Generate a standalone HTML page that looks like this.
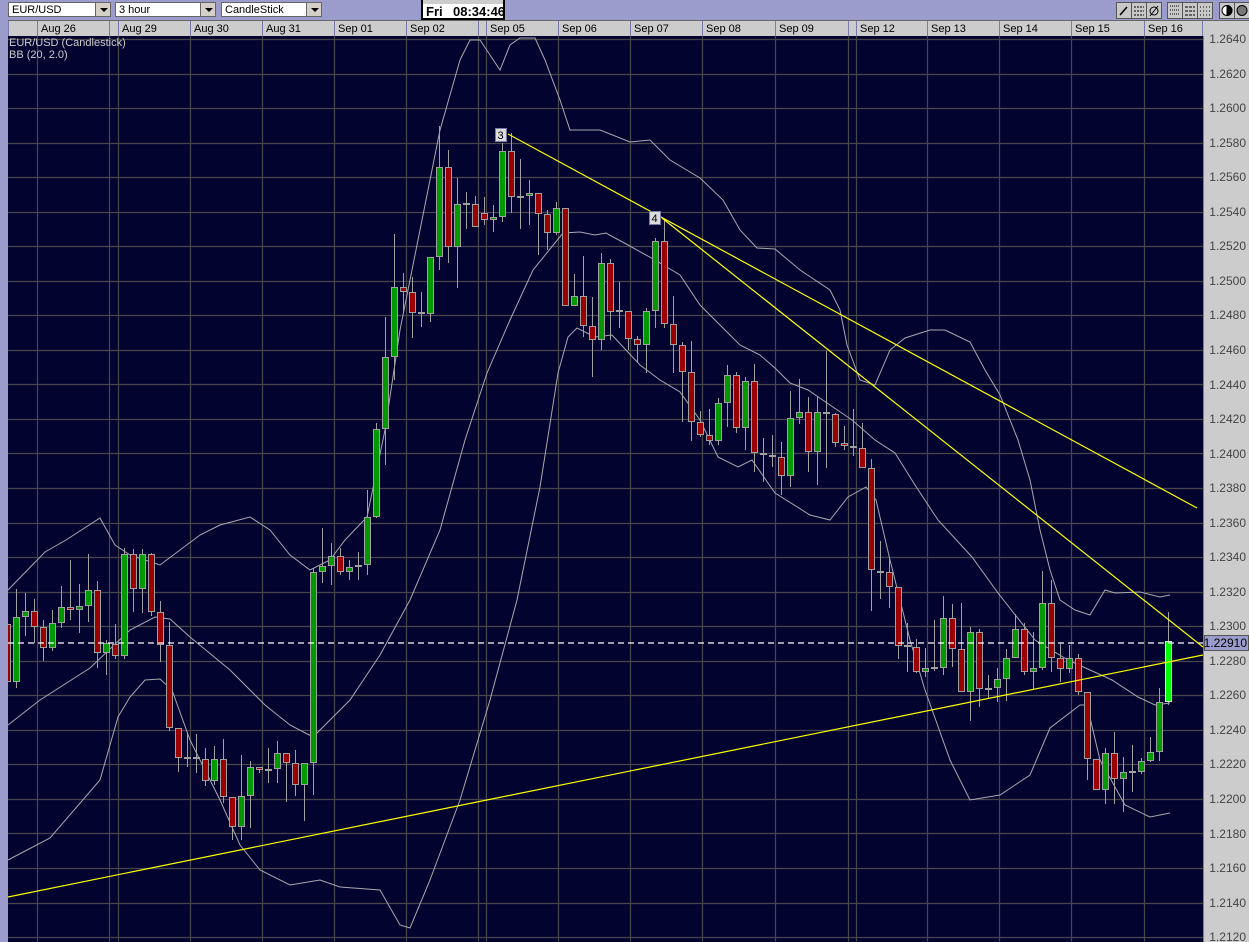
<!DOCTYPE html>
<html><head><meta charset="utf-8"><style>
html,body{margin:0;padding:0;}
body{width:1249px;height:942px;position:relative;overflow:hidden;background:#9c9ccc;font-family:"Liberation Sans",sans-serif;}
.dd{position:absolute;top:2px;height:15px;background:#fff;border:1px solid #666;font-size:11px;line-height:15px;padding-left:3px;box-sizing:border-box;}
.ar{position:absolute;top:2px;width:16px;height:15px;background:#d4d0c8;border:1px solid #666;box-sizing:border-box;}
.ar:after{content:"";position:absolute;left:4px;top:5px;border-left:4px solid transparent;border-right:4px solid transparent;border-top:4px solid #000;}
.clk{position:absolute;left:421px;top:0;width:84px;height:20px;background:#fff;border:2px solid #000;border-top:none;box-sizing:border-box;font-weight:bold;font-size:13px;line-height:20px;}
</style></head><body>
<div class="dd" style="left:8px;width:88px;">EUR/USD</div><div class="ar" style="left:95px"></div>
<div class="dd" style="left:115px;width:86px;">3 hour</div><div class="ar" style="left:200px"></div>
<div class="dd" style="left:221px;width:86px;">CandleStick</div><div class="ar" style="left:306px"></div>
<div class="clk"><div style="position:absolute;left:0;top:0;width:80px;height:4px;background:#ccc"></div><span style="position:absolute;left:3px;top:2px">Fri</span><span style="position:absolute;left:30px;top:2px">08:34:46</span></div>
<svg width="1249" height="942" style="position:absolute;left:0;top:0" id="s" xmlns="http://www.w3.org/2000/svg">
<defs><clipPath id="cp"><rect x="8" y="36" width="1195" height="906"/></clipPath></defs>
<g fill="#c8c8c8" stroke="#555">
<rect x="1116.5" y="2.5" width="15" height="16"/><rect x="1131.5" y="2.5" width="15" height="16"/><rect x="1146.5" y="2.5" width="15" height="16"/>
<rect x="1167.5" y="2.5" width="15" height="16"/><rect x="1182.5" y="2.5" width="15" height="16"/><rect x="1197.5" y="2.5" width="15" height="16"/>
<rect x="1219.5" y="2.5" width="15" height="16"/><rect x="1234.5" y="2.5" width="15" height="16"/>
</g>
<g stroke="#000" fill="none">
<path d="M1120 15 L1127 7" stroke-width="1.5"/>
<path d="M1134 7h10M1134 11h10M1134 15h10" stroke-dasharray="2 1"/>
<circle cx="1154" cy="11" r="4"/><path d="M1150 16 L1158 6"/>
<path d="M1170 6h10M1170 10h10M1170 14h10" stroke-dasharray="1 1"/>
<path d="M1185 7h10M1185 11h10M1185 15h10" stroke-dasharray="3 1"/>
<path d="M1200 7h10M1200 11h10M1200 15h10" stroke-dasharray="1 2"/>
<circle cx="1227" cy="10.5" r="5" fill="#fff"/><path d="M1227 5.5 A5 5 0 0 1 1227 15.5Z" fill="#000"/>
<circle cx="1242" cy="10.5" r="5" fill="#777"/>
</g>
<rect x="8" y="21" width="1241" height="15" fill="#cccccc"/>
<line x1="8" y1="20.5" x2="1249" y2="20.5" stroke="#666"/>
<g stroke="#7a7aa8"><path d="M8.5 21v15M37.5 21v15M109.5 21v15M118.5 21v15M190.5 21v15M262.5 21v15M334.5 21v15M406.5 21v15M478.5 21v15M486.5 21v15M558.5 21v15M630.5 21v15M702.5 21v15M775.5 21v15M848.5 21v15M856.5 21v15M927.5 21v15M999.5 21v15M1071.5 21v15M1144.5 21v15M1202.5 21v15"/></g>
<g font-size="11" fill="#000" font-family="Liberation Sans,sans-serif">
<text x="41" y="32">Aug 26</text><text x="122" y="32">Aug 29</text><text x="194" y="32">Aug 30</text><text x="266" y="32">Aug 31</text><text x="338" y="32">Sep 01</text><text x="410" y="32">Sep 02</text><text x="490" y="32">Sep 05</text><text x="562" y="32">Sep 06</text><text x="634" y="32">Sep 07</text><text x="706" y="32">Sep 08</text><text x="779" y="32">Sep 09</text><text x="860" y="32">Sep 12</text><text x="931" y="32">Sep 13</text><text x="1003" y="32">Sep 14</text><text x="1075" y="32">Sep 15</text><text x="1148" y="32">Sep 16</text>
</g>
<rect x="8" y="36" width="1195" height="906" fill="#030330"/>
<rect x="0" y="21" width="8" height="921" fill="#9c9ccc"/>
<rect x="1203" y="36" width="46" height="906" fill="#cccccc"/>
<line x1="1203.5" y1="36" x2="1203.5" y2="942" stroke="#7a7aa8"/>
<g id="grid" stroke="#45454a" stroke-width="1.2"></g>
<g id="bands" fill="none" stroke="#a8a8b0" stroke-width="1" clip-path="url(#cp)"></g>
<g id="cndl" clip-path="url(#cp)"></g>
<line x1="8" y1="643" x2="1203" y2="643" stroke="#fff" stroke-dasharray="6 4" stroke-width="1.2"/>
<g stroke="#ffff00" stroke-width="1.2" clip-path="url(#cp)">
<line x1="508" y1="134" x2="1197" y2="508"/>
<line x1="662" y1="218" x2="1203" y2="647"/>
<line x1="8" y1="897" x2="1203" y2="655"/>
</g>
<rect x="495.5" y="128.5" width="11" height="13" fill="#dcdcdc" stroke="#7a7aa8"/>
<text x="497.5" y="139" font-size="11" fill="#000">3</text>
<rect x="649.5" y="211.5" width="11" height="13" fill="#dcdcdc" stroke="#7a7aa8"/>
<text x="651.5" y="222" font-size="11" fill="#000">4</text>
<g font-size="11" fill="#cccccc"><text x="9" y="46">EUR/USD (Candlestick)</text><text x="9" y="58">BB (20, 2.0)</text></g>
<g font-size="12" fill="#444" text-anchor="end">
<text x="1246" y="43">1.2640</text><text x="1246" y="78">1.2620</text><text x="1246" y="112">1.2600</text><text x="1246" y="147">1.2580</text><text x="1246" y="181">1.2560</text><text x="1246" y="216">1.2540</text><text x="1246" y="250">1.2520</text><text x="1246" y="285">1.2500</text><text x="1246" y="319">1.2480</text><text x="1246" y="354">1.2460</text><text x="1246" y="389">1.2440</text><text x="1246" y="423">1.2420</text><text x="1246" y="458">1.2400</text><text x="1246" y="492">1.2380</text><text x="1246" y="527">1.2360</text><text x="1246" y="561">1.2340</text><text x="1246" y="596">1.2320</text><text x="1246" y="630">1.2300</text><text x="1246" y="665">1.2280</text><text x="1246" y="699">1.2260</text><text x="1246" y="734">1.2240</text><text x="1246" y="768">1.2220</text><text x="1246" y="803">1.2200</text><text x="1246" y="838">1.2180</text><text x="1246" y="872">1.2160</text><text x="1246" y="907">1.2140</text><text x="1246" y="941">1.2120</text>
</g>
<rect x="1204.5" y="635.5" width="44" height="15" fill="#9c9ccc" stroke="#555"/>
<text x="1247" y="647" font-size="12" fill="#000" text-anchor="end">1.22910</text>
</svg>
<script>
var NS="http://www.w3.org/2000/svg";
function el(p,t,a){var e=document.createElementNS(NS,t);for(var k in a)e.setAttribute(k,a[k]);p.appendChild(e);return e;}
var g=document.getElementById('grid');
var d="";
for(var k=0;k<27;k++){var y=Math.round(39+k*34.54)+0.5;d+="M8 "+y+"H1203";}
[37,109,118,190,262,334,406,478,486,558,630,702,775,848,856,927,999,1071,1144].forEach(function(x){d+="M"+(x+0.5)+" 36V942";});
el(g,'path',{d:d});
var B=[
[[8,590],[45,552],[66,540],[100,518],[115,545],[130,555],[160,565],[180,550],[200,535],[220,525],[250,517],[270,530],[290,555],[310,570],[330,560],[345,540],[367,517],[385,430],[400,330],[420,230],[440,130],[460,60],[470,40],[480,40],[490,55],[500,70],[510,45],[520,38],[535,38],[545,60],[560,100],[570,130],[600,130],[630,142],[650,140],[670,160],[700,178],[723,200],[740,230],[757,248],[775,249],[800,270],[830,290],[840,310],[847,345],[860,380],[875,385],[890,350],[905,338],[930,330],[945,330],[970,342],[985,370],[1000,395],[1010,420],[1018,440],[1030,480],[1040,530],[1050,570],[1060,600],[1075,610],[1090,615],[1105,590],[1115,593],[1140,592],[1160,597],[1170,595]],
[[8,725],[40,700],[90,668],[130,630],[155,617],[170,619],[190,637],[230,670],[265,705],[290,725],[313,737],[350,700],[380,655],[410,600],[440,530],[465,440],[487,373],[510,320],[533,270],[563,233],[580,232],[595,235],[606,233],[628,245],[655,260],[680,275],[700,305],[720,325],[740,345],[760,355],[775,368],[790,383],[808,390],[830,405],[852,420],[875,440],[895,453],[915,485],[938,520],[972,557],[998,593],[1035,640],[1068,660],[1112,680],[1138,697],[1155,705],[1170,703]],
[[8,860],[50,838],[100,780],[118,717],[130,697],[145,680],[160,679],[172,690],[190,740],[205,770],[220,800],[240,845],[260,870],[290,885],[320,880],[340,887],[380,890],[400,925],[410,928],[430,880],[460,800],[490,700],[517,600],[540,487],[558,373],[568,337],[577,328],[595,337],[612,335],[640,365],[660,380],[680,392],[700,420],[718,457],[738,467],[752,460],[775,493],[810,515],[830,520],[848,497],[866,487],[876,500],[890,560],[910,640],[925,690],[950,760],[970,800],[1000,795],[1030,775],[1050,728],[1080,705],[1087,705],[1100,760],[1125,805],[1150,817],[1170,813]]
];
var bg=document.getElementById('bands');
B.forEach(function(p){el(bg,'polyline',{points:p.map(function(q){return q.join(',');}).join(' ')});});
var C=[[624,682,615,688,'r'],[617,682,589,688,'g'],[611,617,593,636,'g'],[611,627,599,643,'r'],[627,648,620,661,'r'],[623,648,610,651,'g'],[607,623,586,628,'g'],[607,610,560,620,'r'],[606,610,584,633,'g'],[590,606,554,622,'g'],[590,653,581,668,'r'],[643,653,640,675,'g'],[644,656,624,659,'r'],[554,656,548,659,'g'],[554,589,549,612,'r'],[554,589,549,613,'g'],[554,612,553,616,'r'],[612,645,601,662,'r'],[645,728,622,731,'r'],[728,758,728,772,'r'],[758,758,733,767,'d'],[757,759,734,773,'r'],[759,781,748,786,'r'],[759,781,746,785,'g'],[759,797,739,803,'r'],[797,827,797,840,'r'],[796,827,755,840,'g'],[767,796,761,828,'g'],[767,770,767,773,'r'],[770,770,748,783,'d'],[753,769,741,783,'g'],[753,763,753,802,'r'],[763,785,750,796,'r'],[763,785,763,821,'g'],[572,763,568,795,'g'],[566,572,528,583,'g'],[556,566,543,585,'g'],[556,572,548,575,'r'],[567,572,560,580,'g'],[566,566,552,580,'d'],[517,565,490,575,'g'],[429,517,423,518,'g'],[357,429,317,465,'g'],[287,357,234,380,'g'],[287,292,273,312,'r'],[292,313,277,338,'r'],[313,313,292,327,'d'],[257,314,257,322,'g'],[167,257,126,270,'g'],[167,247,150,263,'r'],[204,247,178,288,'g'],[204,204,192,229,'d'],[204,227,196,227,'r'],[213,220,197,225,'r'],[217,220,205,232,'g'],[151,217,143,222,'g'],[151,197,133,213,'r'],[197,197,159,229,'d'],[193,196,180,225,'g'],[193,214,193,255,'r'],[214,233,210,250,'r'],[208,233,202,235,'g'],[208,306,208,306,'r'],[296,306,274,306,'g'],[296,326,256,337,'r'],[326,340,297,377,'r'],[263,340,253,350,'g'],[263,312,259,340,'r'],[311,311,282,328,'d'],[311,339,311,350,'r'],[339,345,336,363,'r'],[311,345,308,373,'g'],[241,311,238,328,'g'],[241,324,220,328,'r'],[324,345,296,373,'r'],[345,372,342,422,'r'],[372,422,341,441,'r'],[422,435,411,437,'r'],[435,441,409,445,'r'],[403,441,398,445,'g'],[375,403,365,427,'g'],[375,428,372,433,'r'],[381,428,377,450,'g'],[381,453,364,472,'r'],[454,454,438,482,'d'],[455,457,435,467,'r'],[457,476,442,495,'r'],[418,476,391,487,'g'],[412,418,379,424,'g'],[412,452,397,472,'r'],[412,452,397,485,'g'],[412,414,351,468,'r'],[414,443,413,447,'r'],[443,446,426,450,'r'],[446,448,409,456,'r'],[448,468,423,468,'r'],[468,570,459,611,'r'],[571,572,541,599,'r'],[572,587,557,608,'r'],[587,646,587,659,'r'],[646,646,623,672,'d'],[647,672,639,673,'r'],[668,672,648,677,'g'],[668,668,620,671,'d'],[618,668,596,675,'g'],[618,649,604,667,'r'],[649,692,603,692,'r'],[632,692,627,721,'g'],[632,689,629,707,'r'],[689,689,675,699,'d'],[679,688,668,702,'g'],[658,679,649,701,'g'],[629,658,614,658,'g'],[629,672,623,675,'r'],[668,672,632,689,'g'],[603,668,571,670,'g'],[603,658,580,672,'r'],[658,669,644,682,'r'],[658,669,645,673,'g'],[658,692,654,695,'r'],[692,759,692,780,'r'],[759,790,759,790,'r'],[753,790,748,804,'g'],[753,779,732,804,'r'],[772,779,757,812,'g'],[772,772,745,792,'d'],[761,772,758,774,'g'],[752,761,737,762,'g'],[702,752,688,761,'g'],[641,702,612,705,'G']];
var cg=document.getElementById('cndl');
var col={g:'#009a00',r:'#9a0000',G:'#00ff00'};
C.forEach(function(c,i){
 var x=Math.round(7.3+9*i)+0.5;
 el(cg,'line',{x1:x,y1:c[2],x2:x,y2:c[3],stroke:'#a0a0a0'});
 if(c[4]=='d'){el(cg,'rect',{x:x-3.5,y:c[0]-1,width:7,height:2,fill:'#a0a0a0'});}
 else{var h=Math.max(c[1]-c[0],2);el(cg,'rect',{x:x-3,y:c[0]+0.5,width:6,height:h-1,fill:col[c[4]],stroke:c[4]=='G'?'#ddd':'#a0a0a0'});}
});
</script>
</body></html>
